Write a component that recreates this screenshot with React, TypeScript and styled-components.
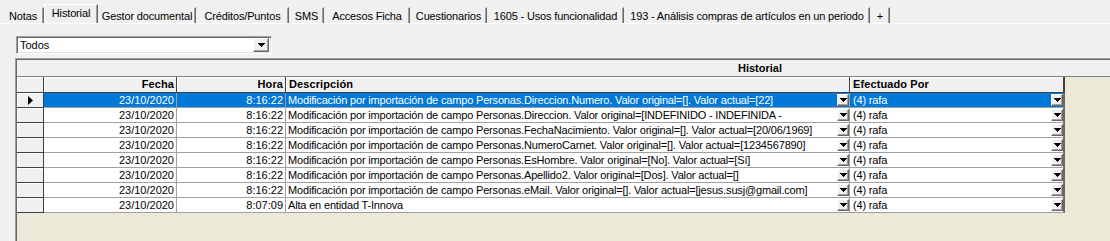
import React from 'react';
import styled, { createGlobalStyle } from 'styled-components';

const GlobalStyle = createGlobalStyle`
  html, body { margin: 0; padding: 0; background: #f0f0f0; }
  body {
    font-family: "Liberation Sans", Arial, sans-serif;
    font-size: 11px;
    color: #000;
    overflow: hidden;
  }
`;

const Window = styled.div`
  width: 1110px;
  height: 241px;
  overflow: hidden;
  background: #f0f0f0;
`;

const TabStrip = styled.div`
  display: flex;
  align-items: flex-end;
  height: 23px;
  padding-left: 2px;
  border-bottom: 1px solid #fff;
`;

const Tab = styled.div<{ $w: number; $active?: boolean }>`
  box-sizing: border-box;
  width: ${(p) => p.$w}px;
  height: ${(p) => (p.$active ? 19 : 16)}px;
  border-left: 1px solid ${(p) => (p.$active ? '#fff' : 'transparent')};
  border-top: 1px solid ${(p) => (p.$active ? '#fff' : 'transparent')};
  border-right: 1px solid #696969;
  box-shadow: inset -1px 0 #a0a0a0;
  display: flex;
  align-items: center;
  justify-content: center;
  white-space: nowrap;
  letter-spacing: -0.15px;
  padding-bottom: ${(p) => (p.$active ? 2 : 0)}px;
`;

const Page = styled.div`
  padding: 12px 0 0 16px;
`;

const Combo = styled.div`
  box-sizing: border-box;
  width: 256px;
  height: 18px;
  border: 1px solid;
  border-color: #a0a0a0 #fff #fff #a0a0a0;
  box-shadow: inset 1px 1px #696969, inset -1px -1px #e3e3e3;
  background: #fff;
  display: flex;
  align-items: center;
  justify-content: space-between;
  padding: 0 2px 0 3px;
`;

const DropButton = styled.div<{ $w: number; $h: number }>`
  box-sizing: border-box;
  width: ${(p) => p.$w}px;
  height: ${(p) => p.$h}px;
  flex: none;
  background: #f0f0f0;
  border: 1px solid;
  border-color: #fff #696969 #696969 #fff;
  box-shadow: inset -1px -1px #a0a0a0;
  display: flex;
  align-items: center;
  justify-content: center;
`;

const Grid = styled.div`
  margin: 4px 0 0 -1px;
  height: 190px;
  overflow: hidden;
  border-top: 1px solid #a0a0a0;
  border-left: 1px solid #a0a0a0;
  box-shadow: inset 1px 1px #696969;
  padding: 1px 0 0 1px;
  background: #ece9d8;
`;

const GroupRow = styled.div`
  height: 16px;
  background: #f0f0f0;
  border-bottom: 1px solid #808080;
  display: flex;
  align-items: center;
  padding-left: 27px;
  width: 1432px;
`;

const GroupTitle = styled.div`
  flex: 1;
  text-align: center;
  font-weight: bold;
`;

const Row = styled.div`
  display: flex;
  height: 15px;
`;

const IndicatorCell = styled.div<{ $header?: boolean }>`
  box-sizing: border-box;
  width: 27px;
  height: ${(p) => (p.$header ? 16 : 15)}px;
  flex: none;
  background: #f0f0f0;
  border-right: 1px solid #404040;
  border-bottom: 1px solid #404040;
  box-shadow: inset 1px 1px #fff;
  display: flex;
  align-items: center;
  justify-content: center;
`;

const HeaderCell = styled.div<{ $w: number; $right?: boolean; $last?: boolean }>`
  box-sizing: border-box;
  width: ${(p) => p.$w}px;
  height: 16px;
  flex: none;
  background: #f0f0f0;
  border-right: ${(p) => (p.$last ? 2 : 1)}px solid #404040;
  border-bottom: 1px solid #404040;
  box-shadow: inset 1px 1px #fff;
  font-weight: bold;
  line-height: 15px;
  text-align: ${(p) => (p.$right ? 'right' : 'left')};
  padding: 0 2px 0 3px;
  white-space: nowrap;
  overflow: hidden;
  letter-spacing: 0.1px;
`;

const Cell = styled.div<{ $w: number; $right?: boolean; $sel?: boolean; $last?: boolean; $pl?: number }>`
  box-sizing: border-box;
  width: ${(p) => p.$w}px;
  height: 15px;
  flex: none;
  background: ${(p) => (p.$sel ? '#0078d7' : '#fff')};
  color: ${(p) => (p.$sel ? '#fff' : '#000')};
  border-right: ${(p) => (p.$last ? '2px solid #696969' : '1px solid #a0a0a0')};
  border-bottom: 1px solid #a0a0a0;
  display: flex;
  align-items: center;
  justify-content: ${(p) => (p.$right ? 'flex-end' : 'space-between')};
  padding: 0 ${(p) => (p.$right ? 2 : 0)}px 0 ${(p) => p.$pl ?? 2}px;
  white-space: nowrap;
  overflow: hidden;
  line-height: 14px;
`;

const CellText = styled.span`
  overflow: hidden;
  flex: 1;
  letter-spacing: -0.17px;
`;

const Arrow = () => (
  <svg width="7" height="4" viewBox="0 0 7 4">
    <path d="M0 0H7V1H6V2H5V3H4V4H3V3H2V2H1V1H0Z" fill="#000" />
  </svg>
);

const RowPointer = () => (
  <svg width="5" height="9" viewBox="0 0 5 9">
    <path d="M0 0L5 4.5L0 9Z" fill="#000" />
  </svg>
);

const tabs = [
  { t: 'Notas', w: 42 },
  { t: 'Historial', w: 54, active: true },
  { t: 'Gestor documental', w: 98 },
  { t: 'Créditos/Puntos', w: 93 },
  { t: 'SMS', w: 35 },
  { t: 'Accesos Ficha', w: 86 },
  { t: 'Cuestionarios', w: 77 },
  { t: '1605 - Usos funcionalidad', w: 137 },
  { t: '193 - Análisis compras de artículos en un periodo', w: 246 },
  { t: '+', w: 20 },
];

const rows = [
  { h: '8:16:22', d: 'Modificación por importación de campo Personas.Direccion.Numero. Valor original=[]. Valor actual=[22]' },
  { h: '8:16:22', d: 'Modificación por importación de campo Personas.Direccion. Valor original=[INDEFINIDO - INDEFINIDA -' },
  { h: '8:16:22', d: 'Modificación por importación de campo Personas.FechaNacimiento. Valor original=[]. Valor actual=[20/06/1969]' },
  { h: '8:16:22', d: 'Modificación por importación de campo Personas.NumeroCarnet. Valor original=[]. Valor actual=[1234567890]' },
  { h: '8:16:22', d: 'Modificación por importación de campo Personas.EsHombre. Valor original=[No]. Valor actual=[Sí]' },
  { h: '8:16:22', d: 'Modificación por importación de campo Personas.Apellido2. Valor original=[Dos]. Valor actual=[]' },
  { h: '8:16:22', d: 'Modificación por importación de campo Personas.eMail. Valor original=[]. Valor actual=[jesus.susj@gmail.com]' },
  { h: '8:07:09', d: 'Alta en entidad T-Innova' },
];

export default function App() {
  return (
    <Window>
      <GlobalStyle />
      <TabStrip>
        {tabs.map((t) => (
          <Tab key={t.t} $w={t.w} $active={t.active}>
            {t.t}
          </Tab>
        ))}
      </TabStrip>
      <Page>
        <Combo>
          <span>Todos</span>
          <DropButton $w={16} $h={14}>
            <Arrow />
          </DropButton>
        </Combo>
        <Grid>
          <GroupRow>
            <GroupTitle>Historial</GroupTitle>
          </GroupRow>
          <Row>
            <IndicatorCell $header />
            <HeaderCell $w={133} $right>Fecha</HeaderCell>
            <HeaderCell $w={109} $right>Hora</HeaderCell>
            <HeaderCell $w={564}>Descripción</HeaderCell>
            <HeaderCell $w={215} $last>Efectuado Por</HeaderCell>
          </Row>
          <div style={{ height: 1 }} />
          {rows.map((r, i) => {
            const sel = i === 0;
            return (
              <Row key={i}>
                <IndicatorCell>{sel && <RowPointer />}</IndicatorCell>
                <Cell $w={133} $right $sel={sel}>23/10/2020</Cell>
                <Cell $w={109} $right $sel={sel}>{r.h}</Cell>
                <Cell $w={564} $sel={sel}>
                  <CellText>{r.d}</CellText>
                  <DropButton $w={12} $h={12}>
                    <Arrow />
                  </DropButton>
                </Cell>
                <Cell $w={215} $sel={sel} $last $pl={3}>
                  <CellText>(4) rafa</CellText>
                  <DropButton $w={12} $h={12}>
                    <Arrow />
                  </DropButton>
                </Cell>
              </Row>
            );
          })}
        </Grid>
      </Page>
    </Window>
  );
}
